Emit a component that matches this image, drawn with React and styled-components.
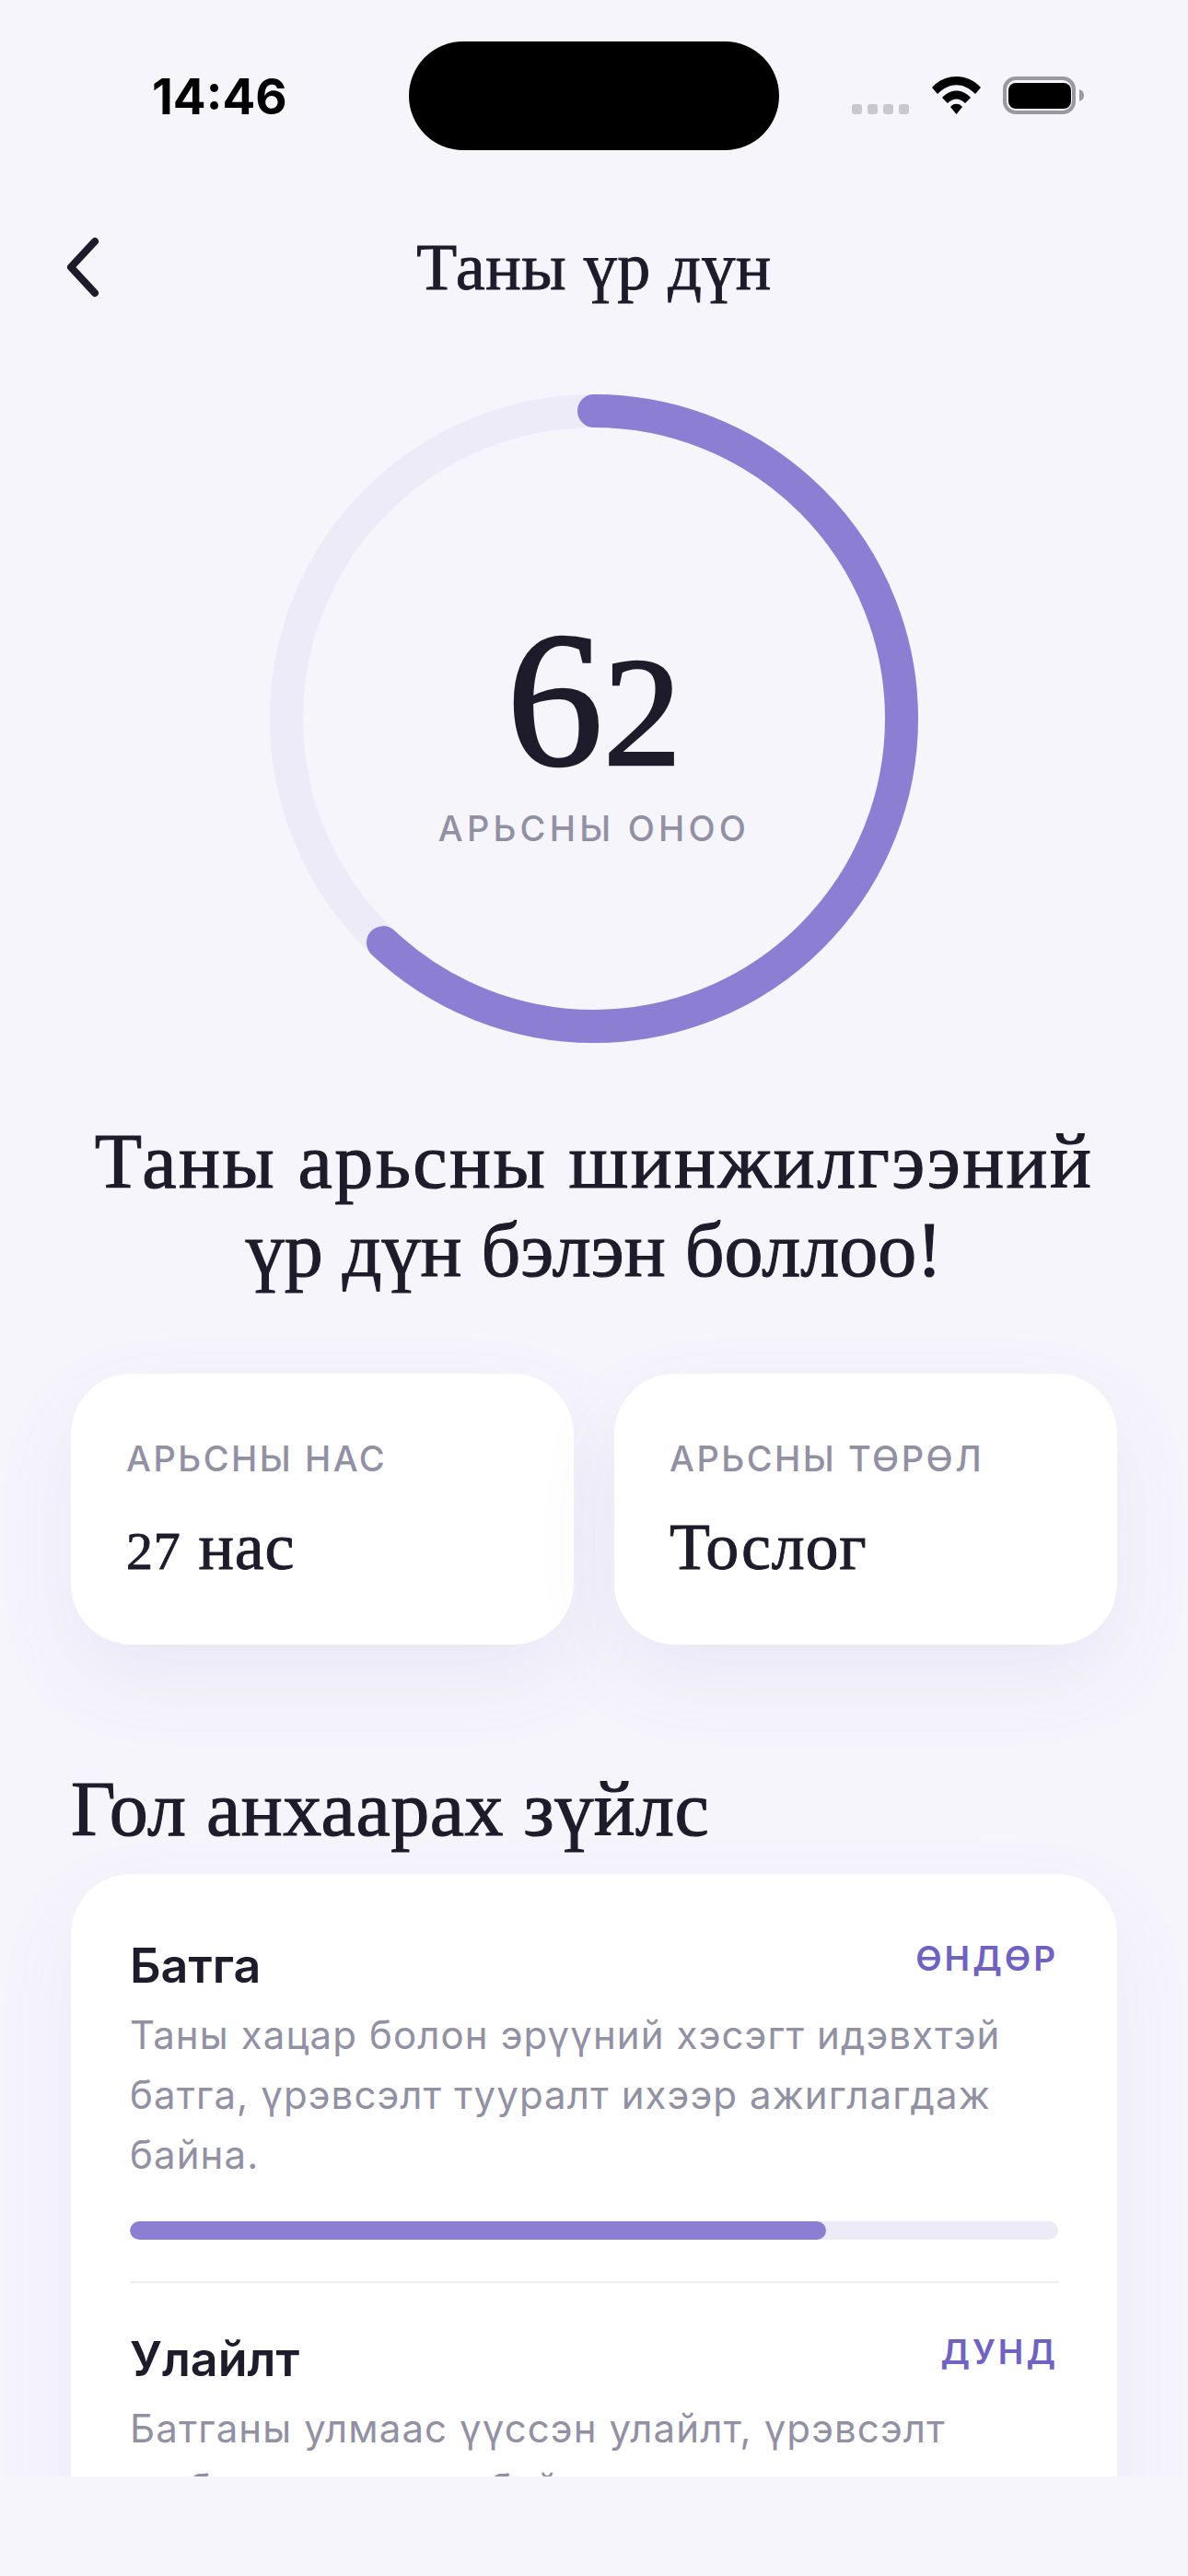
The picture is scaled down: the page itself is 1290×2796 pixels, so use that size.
import React from "react";
import styled, { createGlobalStyle } from "styled-components";

const SERIF = '"Liberation Serif", "DejaVu Serif", serif';
const SANS = 'Inter, "Noto Sans", sans-serif';
const INK = "#1e1b2b";
const MUTED = "#9290a3";
const PURPLE = "#8b7ed3";
const TRACK = "#ecebf7";
const PAPER = "#f6f5fc";

const Global = createGlobalStyle`
  html, body { margin: 0; padding: 0; background: ${PAPER}; }
  * { box-sizing: border-box; }
`;

const Phone = styled.div`
  width: 1290px;
  height: 2796px;
  display: flex;
  flex-direction: column;
  background: ${PAPER};
  overflow: hidden;
`;
const Viewport = styled.div`
  height: 2688px;
  overflow: hidden;
  flex: none;
`;
const StatusBar = styled.div`
  height: 162px;
  padding: 45px 0 0 165px;
  display: flex;
  align-items: flex-start;
`;
const Clock = styled.div`
  width: 279px;
  margin-top: 27px;
  font: 700 53px/66px ${SANS};
  color: #000;
`;
const Island = styled.div`
  width: 402px;
  height: 118px;
  border-radius: 59px;
  background: #000;
`;
const StatusIcons = styled.svg`
  margin: 32px 0 0 78px;
  flex: none;
`;
const NavBar = styled.div`
  height: 195px;
  padding: 60px 70px 0;
  display: grid;
  grid-template-columns: 40px 1fr 40px;
  align-items: center;
`;
const NavTitle = styled.div`
  text-align: center;
  font: 400 72px/90px ${SERIF};
  letter-spacing: 0.5px;
  -webkit-text-stroke: 0.9px ${INK};
  color: ${INK};
`;
const RingWrap = styled.div`
  position: relative;
  width: 704px;
  height: 704px;
  margin: 71px auto 0;
`;
const RingCenter = styled.div`
  position: absolute;
  inset: 0;
  padding-top: 226px;
  display: flex;
  flex-direction: column;
  align-items: center;
`;
const Score = styled.div`
  font: 400 210px/210px ${SERIF};
  -webkit-text-stroke: 2.5px ${INK};
  color: ${INK};
  white-space: nowrap;
`;
const OldStyleDigit = styled.span`
  font-size: ${(p) => p.$size}px;
  line-height: 0;
`;
const ScoreLabel = styled.div`
  margin-top: 13px;
  font: 500 38px/44px ${SANS};
  letter-spacing: 4.2px;
  color: ${MUTED};
`;
const Headline = styled.h1`
  margin: 81px 0 0;
  text-align: center;
  font: 400 84px/96px ${SERIF};
  -webkit-text-stroke: 1.1px ${INK};
  color: ${INK};
`;
const HeadlineLine = styled.span`
  display: block;
  letter-spacing: ${(p) => p.$spacing}px;
`;
const Cards = styled.div`
  margin: 86px 77px 0;
  display: grid;
  grid-template-columns: 1fr 1fr;
  gap: 44px;
`;
const StatCard = styled.div`
  height: 294px;
  padding: 70px 60px 0;
  background: #fff;
  border-radius: 66px;
  box-shadow: 0 36px 90px rgba(110, 100, 190, 0.09);
`;
const StatLabel = styled.div`
  font: 500 38px/44px ${SANS};
  letter-spacing: 2.5px;
  color: ${MUTED};
`;
const StatValue = styled.div`
  margin-top: 32px;
  font: 400 72px/84px ${SERIF};
  letter-spacing: 0.8px;
  -webkit-text-stroke: 0.9px ${INK};
  color: ${INK};
`;
const SectionTitle = styled.h2`
  margin: 129px 77px 0;
  font: 400 84px/100px ${SERIF};
  letter-spacing: 0.5px;
  -webkit-text-stroke: 1.1px ${INK};
  color: ${INK};
`;
const Panel = styled.div`
  margin: 20px 77px 0;
  padding: 70px 64px 60px;
  background: #fff;
  border-radius: 66px;
  box-shadow: 0 36px 90px rgba(110, 100, 190, 0.08);
`;
const Factor = styled.div`
  & + & {
    margin-top: 45px;
    padding-top: 53px;
    border-top: 2px solid #eeedf5;
  }
`;
const FactorHead = styled.div`
  display: flex;
  justify-content: space-between;
  align-items: flex-start;
`;
const FactorName = styled.div`
  font: 600 52px/60px ${SANS};
  color: ${INK};
`;
const Level = styled.div`
  font: 600 37px/44px ${SANS};
  letter-spacing: 3px;
  color: #7062bf;
`;
const FactorText = styled.p`
  margin: 12px 0 0;
  font: 400 42px/65px ${SANS};
  letter-spacing: 1.1px;
  white-space: pre-line;
  color: ${MUTED};
`;
const Bar = styled.div`
  margin-top: 40px;
  height: 20px;
  border-radius: 10px;
  background: ${TRACK};
  overflow: hidden;
`;
const BarFill = styled.div`
  height: 100%;
  border-radius: 10px;
  background: ${PURPLE};
`;

const R = 334;
const C = 2 * Math.PI * R;

const factors = [
  { name: "Батга", level: "ӨНДӨР", pct: 75, text: "Таны хацар болон эрүүний хэсэгт идэвхтэй батга, үрэвсэлт тууралт ихээр ажиглагдаж байна." },
  { name: "Улайлт", level: "ДУНД", pct: 50, text: "Батганы улмаас үүссэн улайлт, үрэвсэлт\nнь бүх хэсэгт тод байна." },
];

export default function App() {
  return (
    <Phone>
      <Global />
      <Viewport>
        <StatusBar>
          <Clock>14:46</Clock>
          <Island />
          <StatusIcons width="256" height="64" viewBox="0 0 256 64">
            <g fill="#c9c8cf">
              <rect x="1" y="36" width="11" height="11" rx="3" />
              <rect x="18" y="36" width="11" height="11" rx="3" />
              <rect x="35" y="36" width="11" height="11" rx="3" />
              <rect x="52" y="36" width="11" height="11" rx="3" />
            </g>
            <path d="M88 18 C102 2 127 2 141 18 L135 25 C122 12 107 12 94 25 Z M99 29 C108 19 121 19 130 29 L124 35 C118 29 111 29 105 35 Z M108 39 C111 34.500 118 34.500 121 39 L114.500 47 Z" fill="#000" />
            <rect x="167" y="8" width="75" height="37" rx="12" fill="none" stroke="#9a99a1" strokeWidth="4" />
            <rect x="171" y="13" width="68" height="28" rx="8" fill="#000" />
            <path d="M248 20 C251 21 253 23 253 26.500 C253 30 251 32 248 33 Z" fill="#9a99a1" />
          </StatusIcons>
        </StatusBar>
        <NavBar>
          <svg width="40" height="66" viewBox="0 0 40 66" fill="none">
            <path d="M33 5 L7 33 L33 61" stroke={INK} strokeWidth="8" strokeLinecap="round" strokeLinejoin="round" />
          </svg>
          <NavTitle>Таны үр дүн</NavTitle>
          <span />
        </NavBar>
        <RingWrap>
          <svg width="704" height="704" viewBox="0 0 704 704">
            <circle cx="352" cy="352" r={R} fill="none" stroke={TRACK} strokeWidth="36" />
            <circle
              cx="352"
              cy="352"
              r={R}
              fill="none"
              stroke={PURPLE}
              strokeWidth="36"
              strokeLinecap="round"
              strokeDasharray={`${C * 0.62} ${C}`}
              transform="rotate(-90 352 352)"
            />
          </svg>
          <RingCenter>
            <Score>
              6<OldStyleDigit $size={170}>2</OldStyleDigit>
            </Score>
            <ScoreLabel>АРЬСНЫ ОНОО</ScoreLabel>
          </RingCenter>
        </RingWrap>
        <Headline>
          <HeadlineLine $spacing={2.4}>Таны арьсны шинжилгээний</HeadlineLine>
          <HeadlineLine $spacing={0}>үр дүн бэлэн боллоо!</HeadlineLine>
        </Headline>
        <Cards>
          <StatCard>
            <StatLabel>АРЬСНЫ НАС</StatLabel>
            <StatValue>
              <OldStyleDigit $size={58}>27</OldStyleDigit> нас
            </StatValue>
          </StatCard>
          <StatCard>
            <StatLabel>АРЬСНЫ ТӨРӨЛ</StatLabel>
            <StatValue>Тослог</StatValue>
          </StatCard>
        </Cards>
        <SectionTitle>Гол анхаарах зүйлс</SectionTitle>
        <Panel>
          {factors.map((f) => (
            <Factor key={f.name}>
              <FactorHead>
                <FactorName>{f.name}</FactorName>
                <Level>{f.level}</Level>
              </FactorHead>
              <FactorText>{f.text}</FactorText>
              <Bar>
                <BarFill style={{ width: `${f.pct}%` }} />
              </Bar>
            </Factor>
          ))}
        </Panel>
      </Viewport>
    </Phone>
  );
}
